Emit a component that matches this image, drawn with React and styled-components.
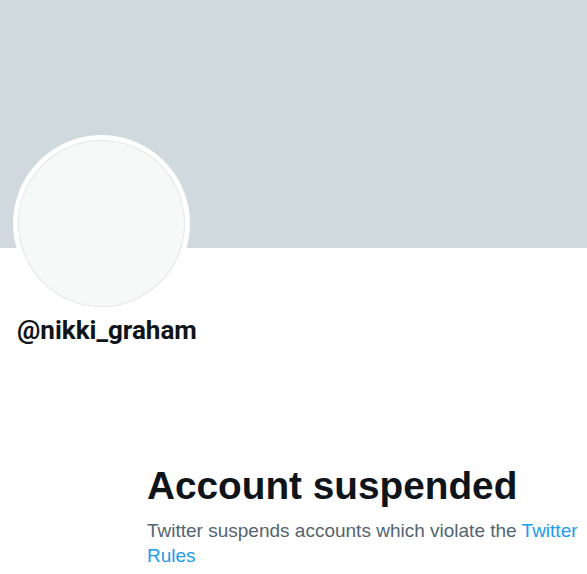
import React from "react";
import styled, { createGlobalStyle } from "styled-components";

const Global = createGlobalStyle`
  html, body { margin: 0; padding: 0; background: #ffffff; }
  body { font-family: "Liberation Sans", Arial, sans-serif; }
`;

const Page = styled.div`
  width: 587px;
  min-height: 574px;
  overflow: hidden;
  background: #ffffff;
`;

const Banner = styled.div`
  height: 248px;
  background: #cfd9de;
`;

const ProfileInfo = styled.div`
  padding: 0 13px;
  display: flex;
  flex-direction: column;
  align-items: flex-start;
`;

const AvatarRing = styled.div`
  margin-top: -113px;
  width: 177px;
  height: 177px;
  box-sizing: border-box;
  padding: 5px;
  border-radius: 50%;
  background: #ffffff;
`;

const AvatarFill = styled.div`
  width: 100%;
  height: 100%;
  box-sizing: border-box;
  border-radius: 50%;
  background: #f7f9f9;
  border: 1px solid rgba(0, 0, 0, 0.07);
`;

const Handle = styled.div`
  margin-top: 3px;
  padding-left: 4px;
  font-family: Roboto, "Noto Sans", sans-serif;
  font-weight: 700;
  font-size: 26px;
  line-height: 31px;
  color: #0f1419;
`;

const Message = styled.div`
  margin-top: 117px;
  padding-left: 147px;
  box-sizing: border-box;
  width: 587px;
`;

const Title = styled.h1`
  margin: 0;
  font-family: "Liberation Sans", Arial, sans-serif;
  font-weight: 700;
  font-size: 38.75px;
  line-height: 45px;
  color: #0f1419;
`;

const Body = styled.p`
  margin: 10px 0 0;
  font-family: "Liberation Sans", Arial, sans-serif;
  font-size: 19px;
  line-height: 25px;
  color: #536471;
`;

const Link = styled.a`
  color: #1d9bf0;
  text-decoration: none;
`;

export default function App() {
  return (
    <Page>
      <Global />
      <Banner />
      <ProfileInfo>
        <AvatarRing>
          <AvatarFill />
        </AvatarRing>
        <Handle>@nikki_graham</Handle>
      </ProfileInfo>
      <Message>
        <Title>Account suspended</Title>
        <Body>
          Twitter suspends accounts which violate the{" "}
          <Link href="#">Twitter Rules</Link>
        </Body>
      </Message>
    </Page>
  );
}
